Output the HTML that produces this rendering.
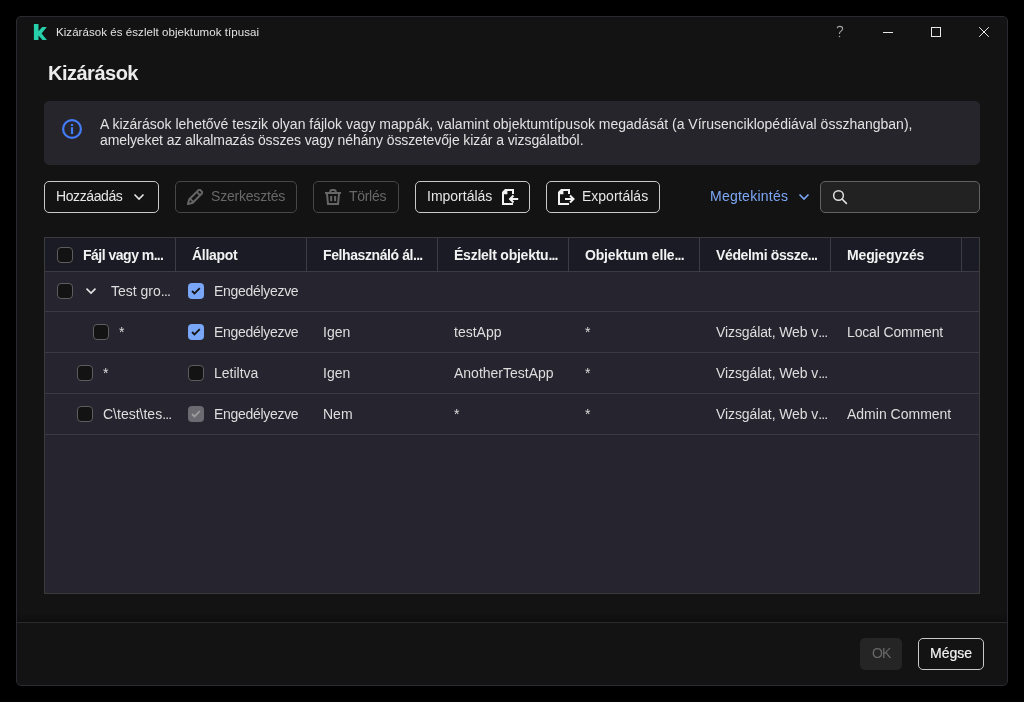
<!DOCTYPE html>
<html><head><meta charset="utf-8">
<style>
*{box-sizing:border-box;margin:0;padding:0}
html,body{width:1024px;height:702px;background:#000;overflow:hidden;font-family:"Liberation Sans",sans-serif;}
.abs{position:absolute}
#win{position:absolute;left:16px;top:16px;width:992px;height:670px;background:#131313;border:1px solid #2b2a31;border-radius:5px;}
.t{position:absolute;white-space:nowrap;line-height:1}
.btn{position:absolute;top:181px;height:32px;border:1px solid #c9c9c9;border-radius:5px;background:#131313}
.btn.dis{border-color:#474747}
.btxt{position:absolute;top:7px;font-size:14px;color:#e6e6e6;white-space:nowrap;line-height:14px}
.dis .btxt{color:#686868}
#tbl{position:absolute;left:44px;top:237px;width:936px;height:357px;background:#26242e;border:1px solid #3b3b3c;overflow:hidden}
.hdr{position:absolute;left:0;top:0;width:934px;height:34px;background:#1b1b25;border-bottom:1px solid #3c3b42}
.sep{position:absolute;top:0;width:1px;height:34px;background:#3c3c43;z-index:2}
.row{position:absolute;left:0;width:934px;height:41px;border-bottom:1px solid #3b3a44}
.ht{position:absolute;top:10px;font-size:14px;font-weight:bold;color:#f2f2f2;white-space:nowrap;line-height:14px}
.ct{position:absolute;top:13px;font-size:14px;color:#dedede;white-space:nowrap;line-height:14px}
.cb{position:absolute;width:16px;height:16px;border:1px solid #5d5d5f;border-radius:4px;background:#131313}
.cbc{position:absolute;width:16px;height:16px;border-radius:4px;background:#79a6f7}
.cbd{position:absolute;width:16px;height:16px;border-radius:4px;background:#6b6a70}
</style></head>
<body>
<div id="root" style="position:absolute;left:0;top:0;width:1024px;height:702px;will-change:transform">
<div id="win"></div>

<!-- title bar -->
<svg class="abs" style="left:33px;top:23px" width="16" height="18" viewBox="0 0 16 18">
  <path d="M0.9 0.9 H5.5 V8.3 L9.2 4 H13.8 L8.6 10.5 L13.9 17 H9.5 L5.5 12.6 V17 H0.9 Z" fill="#26d0aa"/>
</svg>
<div class="t" style="left:56px;top:27px;font-size:11.5px;letter-spacing:0.06px;color:#e2e2e2">Kizárások és észlelt objektumok típusai</div>
<svg class="abs" style="left:832px;top:22px" width="16" height="18" viewBox="0 0 16 18"><path d="M5.3 6.3 C5.3 5 6.4 4.4 7.9 4.4 C9.6 4.4 10.6 5.4 10.6 6.7 C10.6 7.9 9.8 8.5 9 9.1 C8 9.8 7.5 10.4 7.5 11.4 V12" fill="none" stroke="#a3a3a3" stroke-width="1.1"/><circle cx="7.5" cy="14.4" r="0.75" fill="#a3a3a3"/></svg>
<div class="abs" style="left:883px;top:32px;width:10px;height:1px;background:#e8e8e8"></div>
<div class="abs" style="left:931px;top:27px;width:10px;height:10px;border:1px solid #e8e8e8"></div>
<svg class="abs" style="left:978px;top:26px" width="12" height="12" viewBox="0 0 12 12">
  <path d="M1.2 1.2 L10.8 10.8 M10.8 1.2 L1.2 10.8" stroke="#e8e8e8" stroke-width="1"/>
</svg>

<div class="t" style="left:48px;top:63px;font-size:20px;letter-spacing:-0.5px;font-weight:bold;color:#ececec">Kizárások</div>

<!-- info box -->
<div class="abs" style="left:44px;top:101px;width:936px;height:64px;background:#25252b;border-radius:5px"></div>
<svg class="abs" style="left:62px;top:119px" width="20" height="20" viewBox="0 0 20 20">
  <circle cx="10" cy="10" r="8.9" fill="none" stroke="#447bf6" stroke-width="2.2"/>
  <rect x="8.9" y="5" width="2.2" height="2" fill="#447bf6"/>
  <rect x="8.9" y="8.2" width="2.2" height="6.8" fill="#447bf6"/>
</svg>
<div class="t" style="left:100px;top:116px;font-size:14px;line-height:16px;color:#e2e2e2">A kizárások lehetővé teszik olyan fájlok vagy mappák, valamint objektumtípusok megadását (a Vírusenciklopédiával összhangban),<br><span style="letter-spacing:-0.1px">amelyeket az alkalmazás összes vagy néhány összetevője kizár a vizsgálatból.</span></div>

<!-- toolbar -->
<div class="btn" style="left:44px;width:115px">
  <div class="btxt" style="left:11px;letter-spacing:-0.4px">Hozzáadás</div>
  <svg class="abs" style="left:88px;top:11px" width="12" height="8" viewBox="0 0 12 8"><path d="M1.5 1.5 L6 6 L10.5 1.5" fill="none" stroke="#e6e6e6" stroke-width="1.6"/></svg>
</div>
<div class="btn dis" style="left:175px;width:122px">
  <svg class="abs" style="left:11px;top:7px" width="16" height="16" viewBox="0 0 16 16">
    <path d="M0.9 15.1 L2.3 10.2 L11.5 1.1 Q12.4 0.3 13.3 1.1 L14.9 2.7 Q15.7 3.6 14.9 4.5 L5.8 13.7 Z" fill="none" stroke="#666" stroke-width="2" stroke-linejoin="round"/>
    <path d="M3 9.6 L6.4 13 M9.7 2.9 L13.1 6.3" stroke="#666" stroke-width="1.9"/>
  </svg>
  <div class="btxt" style="left:35px;letter-spacing:-0.2px">Szerkesztés</div>
</div>
<div class="btn dis" style="left:313px;width:86px">
  <svg class="abs" style="left:11px;top:7px" width="16" height="16" viewBox="0 0 16 16">
    <path d="M0 3 H16 V5 H0 Z" fill="#666"/>
    <path d="M5.3 4 V2.5 Q5.3 1 7 1 H9 Q10.7 1 10.7 2.5 V4" fill="none" stroke="#666" stroke-width="2"/>
    <path d="M2 5 L3 15 H13 L14 5" fill="none" stroke="#666" stroke-width="2"/>
    <rect x="5.2" y="7" width="2" height="5.2" fill="#666"/>
    <rect x="9.1" y="7" width="2" height="5.2" fill="#666"/>
  </svg>
  <div class="btxt" style="left:35px;letter-spacing:-0.3px">Törlés</div>
</div>
<div class="btn" style="left:415px;width:115px">
  <div class="btxt" style="left:11px">Importálás</div>
  <svg class="abs" style="left:86px;top:7px" width="18" height="17" viewBox="0 0 18 17">
    <path d="M0 3 L3 0 H12 V5 H10 V2 H5.4 V5.3 H2 V14 H11 V16 H0 Z" fill="#f2f2f2"/>
    <path d="M7.8 10 H16.2" stroke="#f2f2f2" stroke-width="2"/>
    <path d="M11.5 6.5 L8 10 L11.5 13.5" fill="none" stroke="#f2f2f2" stroke-width="2"/>
  </svg>
</div>
<div class="btn" style="left:546px;width:114px">
  <svg class="abs" style="left:11px;top:7px" width="18" height="17" viewBox="0 0 18 17">
    <path d="M0 3 L3 0 H12 V5 H10 V2 H5.4 V5.3 H2 V14 H11 V16 H0 Z" fill="#f2f2f2"/>
    <path d="M7 10 H15" stroke="#f2f2f2" stroke-width="2"/>
    <path d="M12 6.5 L15.5 10 L12 13.5" fill="none" stroke="#f2f2f2" stroke-width="2"/>
  </svg>
  <div class="btxt" style="left:35px">Exportálás</div>
</div>
<div class="t" style="left:710px;top:189px;font-size:14px;line-height:14px;letter-spacing:0.25px;color:#7ca8f7">Megtekintés</div>
<svg class="abs" style="left:798px;top:192px" width="12" height="9" viewBox="0 0 12 9"><path d="M1.5 2.5 L6 7 L10.5 2.5" fill="none" stroke="#7aa7f5" stroke-width="1.6"/></svg>
<div class="abs" style="left:820px;top:181px;width:160px;height:32px;background:#222;border:1px solid #626262;border-radius:5px"></div>
<svg class="abs" style="left:831px;top:188px" width="18" height="18" viewBox="0 0 18 18">
  <circle cx="7.5" cy="7.5" r="4.85" fill="none" stroke="#e0e0e0" stroke-width="1.5"/>
  <path d="M11 11 L15.4 15.4" stroke="#e0e0e0" stroke-width="1.6" stroke-linecap="round"/>
</svg>

<!-- table -->
<div id="tbl">
  <div class="hdr">
    <div class="cb" style="left:12px;top:9px"></div>
    <div class="ht" style="left:38px;letter-spacing:-0.5px">Fájl vagy m<span style="letter-spacing:-0.8px">...</span></div>
    <div class="sep" style="left:130px"></div>
    <div class="ht" style="left:147px;letter-spacing:-0.29px">Állapot</div>
    <div class="sep" style="left:261px"></div>
    <div class="ht" style="left:278px;letter-spacing:-0.4px">Felhasználó ál<span style="letter-spacing:-0.8px">...</span></div>
    <div class="sep" style="left:392px"></div>
    <div class="ht" style="left:409px;letter-spacing:-0.24px">Észlelt objektu<span style="letter-spacing:-0.8px">...</span></div>
    <div class="sep" style="left:523px"></div>
    <div class="ht" style="left:540px;letter-spacing:-0.18px">Objektum elle<span style="letter-spacing:-0.8px">...</span></div>
    <div class="sep" style="left:654px"></div>
    <div class="ht" style="left:671px;letter-spacing:-0.36px">Védelmi össze<span style="letter-spacing:-0.8px">...</span></div>
    <div class="sep" style="left:785px"></div>
    <div class="ht" style="left:802px;letter-spacing:-0.14px">Megjegyzés</div>
    <div class="sep" style="left:916px"></div>
  </div>
  <div class="row" style="top:34px;height:40px">
    <div class="cb" style="left:12px;top:11px"></div>
    <svg class="abs" style="left:40px;top:14px" width="12" height="9" viewBox="0 0 12 9"><path d="M1.5 2.6 L6 7.1 L10.5 2.6" fill="none" stroke="#e2e2e2" stroke-width="1.6"/></svg>
    <div class="ct" style="left:66px;top:12px">Test gro<span style="letter-spacing:-0.8px">...</span></div>
    <div class="cbc" style="left:143px;top:11px"><svg width="16" height="16" viewBox="0 0 16 16"><path d="M4 8 L6.5 10.5 L11.8 5.2" fill="none" stroke="#141414" stroke-width="1.8"/></svg></div>
    <div class="ct" style="left:169px;top:12px;letter-spacing:-0.3px">Engedélyezve</div>
  </div>
  <div class="row" style="top:74px">
    <div class="cb" style="left:48px;top:12px"></div>
    <div class="ct" style="left:74px">*</div>
    <div class="cbc" style="left:143px;top:12px"><svg width="16" height="16" viewBox="0 0 16 16"><path d="M4 8 L6.5 10.5 L11.8 5.2" fill="none" stroke="#141414" stroke-width="1.8"/></svg></div>
    <div class="ct" style="left:169px;letter-spacing:-0.3px">Engedélyezve</div>
    <div class="ct" style="left:278px">Igen</div>
    <div class="ct" style="left:409px">testApp</div>
    <div class="ct" style="left:540px">*</div>
    <div class="ct" style="left:671px;letter-spacing:-0.1px">Vizsgálat, Web v<span style="letter-spacing:-0.8px">...</span></div>
    <div class="ct" style="left:802px;letter-spacing:-0.15px">Local Comment</div>
  </div>
  <div class="row" style="top:115px">
    <div class="cb" style="left:32px;top:12px"></div>
    <div class="ct" style="left:58px">*</div>
    <div class="cb" style="left:143px;top:12px"></div>
    <div class="ct" style="left:169px">Letiltva</div>
    <div class="ct" style="left:278px">Igen</div>
    <div class="ct" style="left:409px">AnotherTestApp</div>
    <div class="ct" style="left:540px">*</div>
    <div class="ct" style="left:671px;letter-spacing:-0.1px">Vizsgálat, Web v<span style="letter-spacing:-0.8px">...</span></div>
  </div>
  <div class="row" style="top:156px">
    <div class="cb" style="left:32px;top:12px"></div>
    <div class="ct" style="left:58px">C\test\tes<span style="letter-spacing:-0.8px">...</span></div>
    <div class="cbd" style="left:143px;top:12px"><svg width="16" height="16" viewBox="0 0 16 16"><path d="M4 8 L6.5 10.5 L11.8 5.2" fill="none" stroke="#9c9c9e" stroke-width="1.8"/></svg></div>
    <div class="ct" style="left:169px;letter-spacing:-0.3px">Engedélyezve</div>
    <div class="ct" style="left:278px">Nem</div>
    <div class="ct" style="left:409px">*</div>
    <div class="ct" style="left:540px">*</div>
    <div class="ct" style="left:671px;letter-spacing:-0.1px">Vizsgálat, Web v<span style="letter-spacing:-0.8px">...</span></div>
    <div class="ct" style="left:802px">Admin Comment</div>
  </div>
</div>

<!-- footer -->
<div class="abs" style="left:17px;top:613px;width:990px;height:9px;background:linear-gradient(to bottom,rgba(0,0,0,0),rgba(0,0,0,0.3))"></div>
<div class="abs" style="left:17px;top:622px;width:990px;height:1px;background:#2a2a2e"></div>
<div class="abs" style="left:860px;top:638px;width:42px;height:32px;background:#252525;border-radius:5px"></div>
<div class="t" style="left:872px;top:646px;font-size:14px;line-height:14px;letter-spacing:-0.8px;color:#686868">OK</div>
<div class="btn" style="left:918px;top:638px;width:66px">
  <div class="btxt" style="left:11px;color:#f2f2f2;-webkit-text-stroke:0.2px #f2f2f2">Mégse</div>
</div>
</div>
</body></html>
